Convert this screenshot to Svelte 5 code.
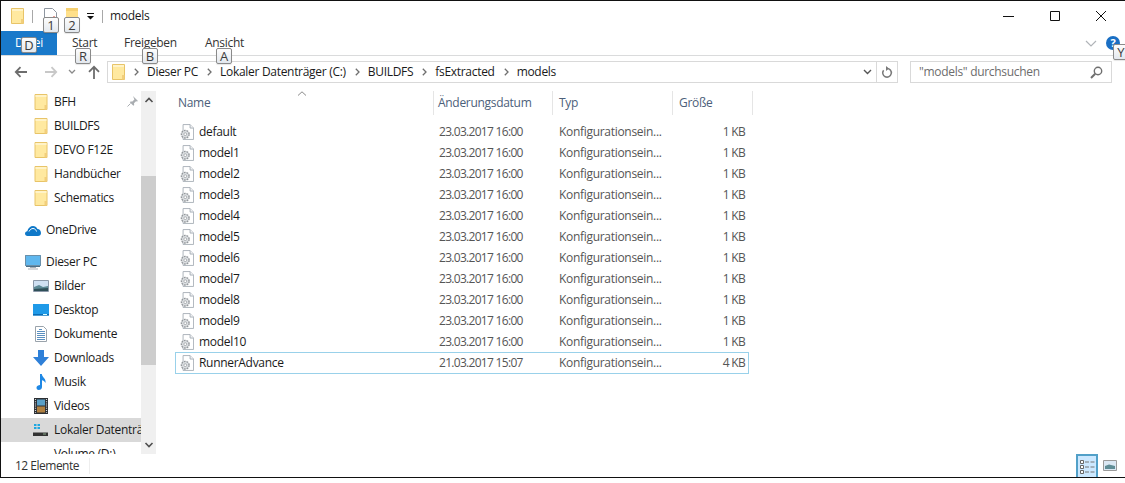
<script>
  const files = [
    ['default','23.03.2017 16:00','1 KB'],['model1','23.03.2017 16:00','1 KB'],['model2','23.03.2017 16:00','1 KB'],
    ['model3','23.03.2017 16:00','1 KB'],['model4','23.03.2017 16:00','1 KB'],['model5','23.03.2017 16:00','1 KB'],
    ['model6','23.03.2017 16:00','1 KB'],['model7','23.03.2017 16:00','1 KB'],['model8','23.03.2017 16:00','1 KB'],
    ['model9','23.03.2017 16:00','1 KB'],['model10','23.03.2017 16:00','1 KB'],['RunnerAdvance','21.03.2017 15:07','4 KB']
  ];
  const quick = ['BFH','BUILDFS','DEVO F12E','Handbücher','Schematics'];
  const pc = [['Bilder','pic'],['Desktop','desk'],['Dokumente','doc'],['Downloads','dl'],['Musik','music'],['Videos','vid']];
  const crumbs = ['Dieser PC','Lokaler Datenträger (C:)','BUILDFS','fsExtracted','models'];
</script>

{#snippet folder(w, h)}
  <svg class="ic" width={w} height={h} viewBox="0 0 13 16">
    <path d="M.5.5h12v15H.5z" fill="#ffe9a0" stroke="#e8c468"/>
    <path d="M1 1h11v2H1z" fill="#fff3c8"/>
    <path d="M10 11h2.500v4.500H10z" fill="#f2cf7c"/>
  </svg>
{/snippet}

{#snippet gear()}
  <svg class="ic" width="14" height="16" viewBox="0 0 16 18">
    <path d="M3.500.5h8l4 4v13h-12z" fill="#fff" stroke="#a4abb4"/>
    <path d="M11.500.5v4h4" fill="#eef0f2" stroke="#a4abb4"/>
    <circle cx="6" cy="11.500" r="4.400" fill="#dcdfe2" stroke="#94989c" stroke-dasharray="2 1.100" stroke-width="1.600"/>
    <circle cx="6" cy="11.500" r="1.600" fill="#fff" stroke="#94989c" stroke-width=".8"/>
  </svg>
{/snippet}

{#snippet navIcon(k)}
  <svg class="ic" width="16" height="16" viewBox="0 0 16 16">
    {#if k==='pic'}
      <path d="M.5 2.500h15v11H.5z" fill="#cfe0f2" stroke="#8b98a8"/><path d="M1 9l5-2 4 2 5-1v5H1z" fill="#5d8a96"/><path d="M1 11l14-1v3H1z" fill="#2f4f58"/>
    {:else if k==='desk'}
      <path d="M0 2h16v11.500H0z" fill="#1f9ae8"/><path d="M0 12h16v1.500H0z" fill="#0b6cb5"/><path d="M10 12h4v1h-4z" fill="#dff"/>
    {:else if k==='doc'}
      <path d="M2.500.5h8l3 3v12h-11z" fill="#fff" stroke="#9aa3ab"/><path d="M6 3h3v1H6zM4 5h8v1H4zM4 7h8v1H4zM4 9h8v1H4zM4 11h8v1H4zM4 13h8v1H4z" fill="#5a8fc0"/>
    {:else if k==='dl'}
      <path d="M5 0h6v7h5l-8 9-8-9h5z" fill="#2f80d8"/>
    {:else if k==='music'}
      <path d="M7 0h1.800c.4 3.500 4.600 4.500 3.700 9-.8-1.800-2.200-2.500-3.500-2.800V13c0 1.800-1.500 3-3.200 3S3.500 15 3.500 13.500 5.500 11 7 11z" fill="#1e88e5"/>
    {:else}
      <path d="M1 0h14v16H1z" fill="#2c2f33"/><path d="M4 1.500h8v6H4z" fill="#5aa0c8"/><path d="M4 8.500h8v6H4z" fill="#b08040"/>
      <path d="M2.500 1v14M13.500 1v14" stroke="#d5d8dc" stroke-width="1.200" stroke-dasharray="1 1.200"/>
    {/if}
  </svg>
{/snippet}

<div class="win">
  <header class="title">
    {@render folder(13,16)}
    <i class="vsep"></i>
    <svg class="ic qa1" width="13" height="16" viewBox="0 0 13 16"><path d="M.5.5h8l4 4v11H.5z" fill="#fff" stroke="#8e96a0"/><path d="M6 12l4-4 1 1-4 4z" fill="#d9442e"/></svg>
    <svg class="ic qa2" width="12" height="14" viewBox="0 0 12 14"><path d="M0 0h12v14H0z" fill="#ffe08a"/><path d="M0 0h12v3H0z" fill="#f6d070"/></svg>
    <svg class="ic qa3" width="7" height="7" viewBox="0 0 7 7"><path d="M0 0h7v1H0zM0 3h7L3.500 6.500z" fill="#111"/></svg>
    <i class="vsep two"></i>
    <span class="titletext">models</span>
    <div class="caption">
      <svg width="12" height="12" viewBox="0 0 12 12"><path d="M0 6.500h11" stroke="#111"/></svg>
      <svg width="12" height="12" viewBox="0 0 12 12"><path d="M1.500 1.500h9v9h-9z" fill="none" stroke="#111"/></svg>
      <svg width="12" height="12" viewBox="0 0 12 12"><path d="M1 1l10 10M11 1L1 11" stroke="#111" stroke-width="1"/></svg>
    </div>
  </header>

  <nav class="tabs">
    <span class="tab file">Datei</span>
    <span class="tab t1">Start</span>
    <span class="tab t2">Freigeben</span>
    <span class="tab t3">Ansicht</span>
    <svg class="chev" width="12" height="7" viewBox="0 0 12 7"><path d="M1 1l5 5 5-5" fill="none" stroke="#b0b4b8" stroke-width="1.200"/></svg>
    <span class="help">?</span>
  </nav>

  <div class="addr">
    <svg class="nav back" width="14" height="12" viewBox="0 0 14 12"><path d="M13 6H2M6.500 1.200L1.800 6l4.700 4.800" fill="none" stroke="#6d6d6d" stroke-width="1.800"/></svg>
    <svg class="nav fwd" width="14" height="12" viewBox="0 0 14 12"><path d="M1 6h11M7.500 1.200L12.200 6l-4.700 4.800" fill="none" stroke="#c8c8c8" stroke-width="1.800"/></svg>
    <svg class="nav dn" width="8" height="6" viewBox="0 0 8 6"><path d="M1 1l3 3 3-3" fill="none" stroke="#8a8a8a" stroke-width="1.300"/></svg>
    <svg class="nav up" width="12" height="14" viewBox="0 0 12 14"><path d="M6 14V2M1 6.800L6 1.800l5 5" fill="none" stroke="#6d6d6d" stroke-width="1.800"/></svg>
    <div class="path">
      {@render folder(13,16)}
      {#each crumbs as c}
        <svg class="sep" width="5" height="8" viewBox="0 0 5 8"><path d="M.8.8L4 4 .8 7.200" fill="none" stroke="#6f6f6f" stroke-width="1.300"/></svg>
        <span class="crumb">{c}</span>
      {/each}
      <span class="spacer"></span>
      <svg class="pdn" width="9" height="6" viewBox="0 0 9 6"><path d="M1 1l3.500 3.500L8 1" fill="none" stroke="#555" stroke-width="1.400"/></svg>
      <span class="refresh">
        <svg width="12" height="13" viewBox="0 0 12 13"><path d="M6 2.500a4.300 4.300 0 1 1-3.400 1.700" fill="none" stroke="#7a7a7a" stroke-width="1.500"/><path d="M5 0v5l3-2.500z" fill="#7a7a7a"/></svg>
      </span>
    </div>
    <div class="search">
      <span>"models" durchsuchen</span>
      <svg width="13" height="13" viewBox="0 0 13 13"><circle cx="8" cy="5" r="3.700" fill="none" stroke="#6f6f6f" stroke-width="1.400"/><path d="M5.200 7.800L1 12" stroke="#6f6f6f" stroke-width="2"/></svg>
    </div>
  </div>

  <div class="main">
    <aside class="side">
      <div class="tree">
        <ul class="group quick">
          {#each quick as q, i}
            <li class="item ind">
              {@render folder(13,16)}<span>{q}</span>
              {#if i===0}
                <svg class="pin" width="11" height="11" viewBox="0 0 11 11"><path d="M6 0l5 5-1 .6-1-.4-2 2 .2 1.800-.8.800L2.800 6.200 3.600 5.400 5.400 5.600l2-2L7 2.600z" fill="#a9adb1"/><path d="M3.500 7.500L.5 10.500" stroke="#a9adb1"/></svg>
              {/if}
            </li>
          {/each}
        </ul>
        <div class="item top od">
          <svg class="ic" width="16" height="11" viewBox="0 0 16 11"><path d="M2.500 11C1 11 0 10 0 8.600S1 6.300 2.300 6.200C3 3 5.500 1 8 1c2 0 3.500 1 4.200 2.800C14.500 4 16 5.800 16 8c0 1.700-1.200 3-3 3z" fill="#0f78c8"/><path d="M4 6.500C5 4.500 6.500 3.500 8 3.500c2 0 3 1.500 3.500 3" fill="none" stroke="#fff"/></svg>
          <span>OneDrive</span>
        </div>
        <div class="item top pc">
          <svg class="ic" width="16" height="15" viewBox="0 0 16 15"><path d="M0 0h16v11H0z" fill="#5fb7ee"/><path d="M.5.500h15v10H.5z" fill="none" stroke="#6b8fa8"/><path d="M1 11h14v1H1z" fill="#4a6f88"/><path d="M5 12h6v1H5zM3 13.500h10v1H3z" fill="#aab0b6"/></svg>
          <span>Dieser PC</span>
        </div>
        {#each pc as [n,k]}
          <div class="item ind">{@render navIcon(k)}<span>{n}</span></div>
        {/each}
        <div class="item ind sel">
          <svg class="ic" width="16" height="16" viewBox="0 0 16 16"><path d="M1 2h2.500v2H1zM4.500 2H7v2H4.500zM1 5h2.500v2H1zM4.500 5H7v2H4.500z" fill="#1ea7e0"/><path d="M0 10.500h15v3.500H0z" fill="#333"/><path d="M10 11.500h3v1h-3z" fill="#8a8"/></svg>
          <span>Lokaler Datenträ</span>
        </div>
        <div class="item ind">
          <svg class="ic" width="16" height="16" viewBox="0 0 16 16"><path d="M0 10h15v4H0z" fill="#bbb"/></svg>
          <span>Volume (D:)</span>
        </div>
      </div>
      <div class="scroll">
        <svg class="sb" width="10" height="6" viewBox="0 0 10 6"><path d="M1.500 5L5 1.500 8.500 5" fill="none" stroke="#505050" stroke-width="1.600"/></svg>
        <div class="track"><div class="thumb"></div></div>
        <svg class="sb" width="10" height="6" viewBox="0 0 10 6"><path d="M1.500 1L5 4.500 8.500 1" fill="none" stroke="#505050" stroke-width="1.600"/></svg>
      </div>
    </aside>

    <section class="list">
      <div class="head">
        <svg class="sort" width="10" height="5" viewBox="0 0 10 5"><path d="M1 4.500L5 .8l4 3.700" fill="none" stroke="#8a8a8a"/></svg>
        <span class="c name">Name</span>
        <span class="c date">Änderungsdatum</span>
        <span class="c type">Typ</span>
        <span class="c size">Größe</span>
      </div>
      <div class="rows">
        {#each files as [n,d,s], i}
          <div class="row" class:focus={i===files.length-1}>
            <span class="c name">{@render gear()}<b>{n}</b></span>
            <span class="c date">{d}</span>
            <span class="c type">Konfigurationsein...</span>
            <span class="c size">{s}</span>
          </div>
        {/each}
      </div>
    </section>
  </div>

  <footer class="status">
    <span class="count">12 Elemente</span>
    <span class="vw det">
      <svg width="16" height="16" viewBox="0 0 16 16"><path d="M1.500 1.500h3v3h-3zM1.500 6.500h3v3h-3zM1.500 11.500h3v3h-3z" fill="#fff" stroke="#666"/><path d="M6 3h4M11.500 3h4M6 8h4M11.500 8h4M6 13h4M11.500 13h4" stroke="#777"/></svg>
    </span>
    <span class="vw last">
      <svg width="14" height="11" viewBox="0 0 14 11"><path d="M.5.500h13v10H.5z" fill="#dbe8f4" stroke="#9a9a9a"/><path d="M2 6l4-1.500L12 6v3H2z" fill="#5f8d96"/></svg>
    </span>
  </footer>

  <div class="tips">
    <span class="tip k1">1</span><span class="tip k2">2</span><span class="tip kd">D</span>
    <span class="tip kr">R</span><span class="tip kb">B</span><span class="tip ka">A</span><span class="tip ky">Y</span>
  </div>
</div>

<style>
  :global(body){margin:0;background:#fff;overflow:hidden}
  .win{position:relative;box-sizing:border-box;width:1125px;height:478px;background:#fff;border:1px solid #111;border-right:0;
    font:12px/16px "Open Sans","Noto Sans",sans-serif;letter-spacing:-.3px;color:#1a1a1a;display:flex;flex-direction:column;overflow:hidden}
  .ic{flex:none;display:block}
  svg{display:block;flex:none}
  .title{height:30px;display:flex;align-items:center;padding-left:10px;flex:none}
  .vsep{width:1px;height:13px;background:#a8a8a8;margin-left:8px}
  .qa1{margin-left:11px}.qa2{margin-left:9px;margin-top:-2px}.qa3{margin-left:9px;margin-top:1px}
  .titletext{margin-left:7px}
  .caption{margin-left:auto;display:flex;gap:34px;padding-right:18px}
  .tabs{height:24px;flex:none;display:flex;align-items:center;position:relative;border-bottom:1px solid #dadbdc;color:#333}
  .tab{height:24px;line-height:24px}
  .file{width:56px;background:#1979ca;color:#fff;text-align:center;margin-right:15px}
  .t1{width:52px}.t2{width:81px}
  .chev{margin-left:auto;margin-right:9px}
  .help{width:14px;height:14px;border-radius:50%;background:#1a6fc4;color:#fff;font-size:11px;line-height:14px;text-align:center;font-weight:700;margin-right:5px}
  .addr{height:32px;flex:none;display:flex;align-items:center;padding-left:13px}
  .nav.fwd{margin-left:16px}.nav.dn{margin-left:10px}.nav.up{margin-left:12px}
  .path{margin-left:7px;width:791px;height:22px;box-sizing:border-box;border:1px solid #d9d9d9;display:flex;align-items:center;padding-left:4px}
  .sep{margin:0 8px 0 9px}
  .spacer{flex:1}
  .pdn{margin-right:4px}
  .refresh{width:20px;height:20px;border-left:1px solid #d9d9d9;display:flex;align-items:center;justify-content:center}
  .search{margin-left:12px;width:202px;height:22px;box-sizing:border-box;border:1px solid #d9d9d9;display:flex;align-items:center;justify-content:space-between;padding:0 8px;color:#6d6d6d}
  .main{flex:1;min-height:0;display:flex}
  .side{width:155px;flex:none;display:flex;position:relative}
  .tree{width:140px;flex:none;padding-top:2px;overflow:hidden}
  .item{height:24px;display:flex;align-items:center;white-space:nowrap;position:relative}
  .ind{padding-left:33px}
  .ind svg.ic{width:16px;margin-left:-1px;margin-right:3px}
  .ind span{margin-left:2px}
  .top{padding-left:24px}
  .top span{margin-left:5px}
  .quick{list-style:none;margin:0 0 8px;padding:0}
  .od{margin-bottom:8px}
  .pin{position:absolute;left:126px;top:6px}
  .sel{background:#d9d9d9}
  .scroll{width:15px;background:#f0f0f0;display:flex;flex-direction:column;align-items:center;padding:6px 0;margin-top:3px;box-sizing:border-box;justify-content:space-between}
  .track{flex:1;width:15px;padding-top:73px;box-sizing:border-box}
  .thumb{height:189px;background:#cdcdcd}
  .list{flex:1;min-width:0;padding-left:20px;position:relative}
  .head{height:28px;display:flex;align-items:center;color:#4c607a;position:relative;margin-top:1px}
  .sort{position:absolute;left:121px;top:2px}
  .head .c{height:24px;line-height:24px;border-right:1px solid #e5e5e5;box-sizing:border-box}
  .c{display:block;flex:none;white-space:nowrap}
  .head .name{width:258px;padding-left:2px}
  .head .date{width:119px;padding-left:4px}
  .head .type{width:120px;padding-left:6px}
  .head .size{width:80px;padding-left:6px}
  .rows{padding-top:4px}
  .row{height:21px;display:flex;align-items:center;width:574px;box-sizing:border-box;border:1px solid transparent;margin-left:-1px;color:#555}
  .row .c{box-sizing:border-box}
  .row .name{display:flex;align-items:center;padding-left:4px;width:257px;color:#1a1a1a}
  .row .date{width:120px;padding-left:6px;letter-spacing:-.7px}
  .row .type{width:120px;padding-left:6px}
  .row .size{width:72px;text-align:right;letter-spacing:-.7px}
  .row b{font-weight:400;margin-left:5px}
  .focus{border-color:#99d1ea;height:22px}
  .status{height:23px;flex:none;display:flex;align-items:center;position:relative;color:#333}
  .count{margin-left:14px;padding-right:10px;border-right:1px solid #eee;letter-spacing:-.5px}
  .vw{width:21px;height:21px;display:flex;align-items:center;justify-content:center;box-sizing:border-box}
  .det{margin-left:auto;margin-right:1px;background:#cce8ff;border:2px solid #52a0c8;border-bottom:0;width:22px;height:23px}
  .last{margin-right:5px}
  .tip{position:absolute;width:14px;height:14px;line-height:14px;text-align:center;border:1px solid #8a8a8a;border-radius:2px;
    background:linear-gradient(#fdfdfd,#e3e8ee);color:#3c3c3c;font-size:13px;letter-spacing:0;box-shadow:0 1px 1px rgba(0,0,0,.1)}
  .k1{left:42px;top:16px}.k2{left:63px;top:16px}.kd{left:20px;top:36px}
  .kr{left:74px;top:47px}.kb{left:141px;top:47px}.ka{left:215px;top:47px}.ky{left:1112px;top:43px}
</style>
